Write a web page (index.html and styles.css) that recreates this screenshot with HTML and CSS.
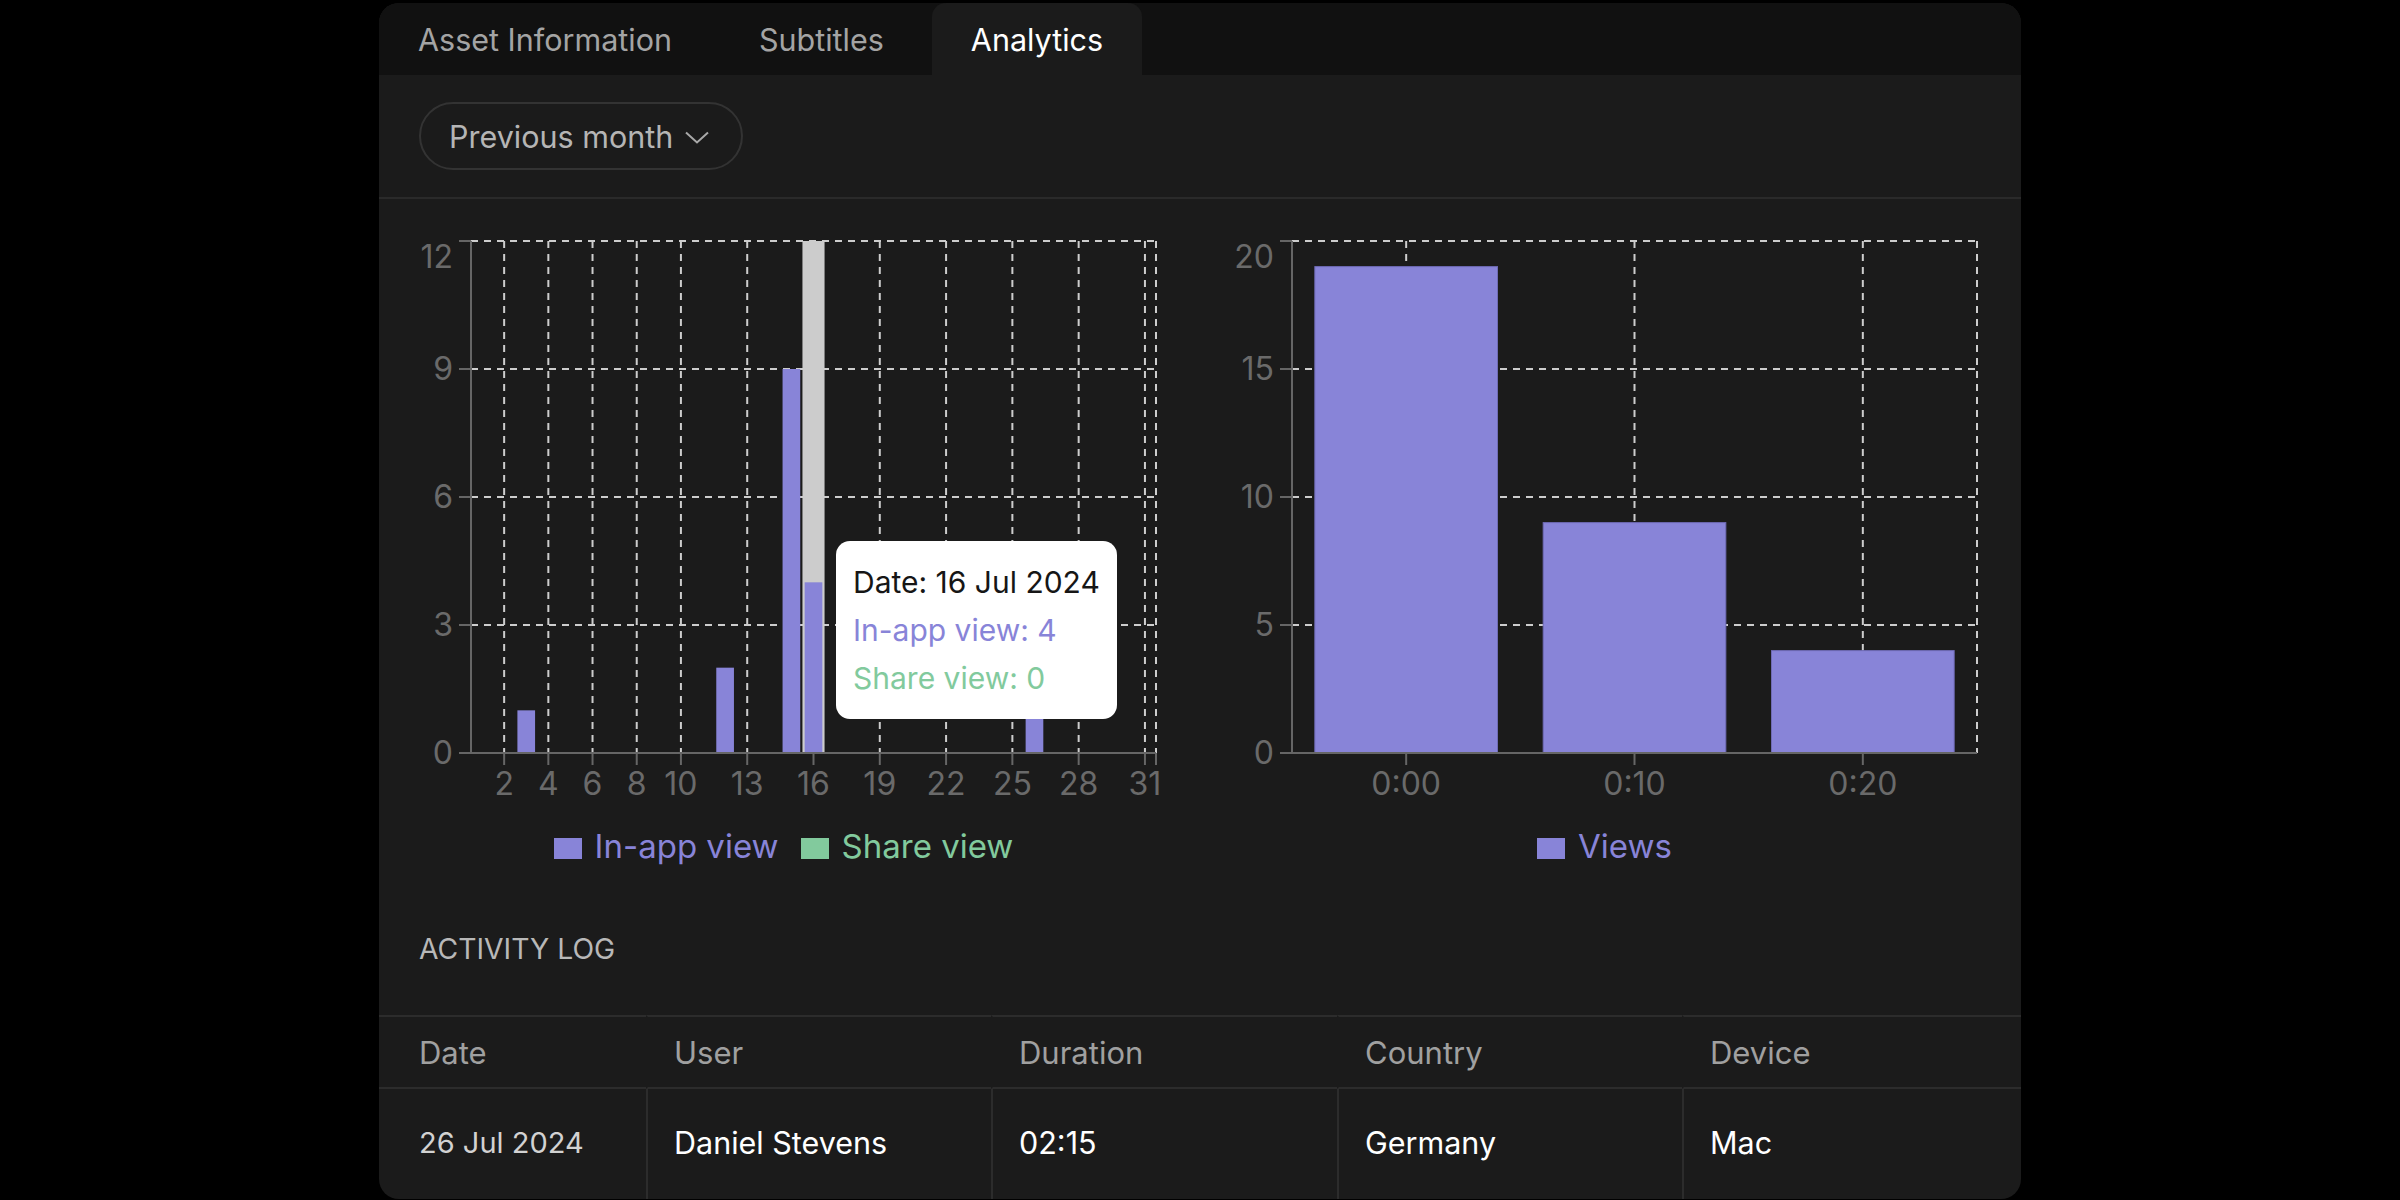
FILE: index.html
```html
<!DOCTYPE html>
<html lang="en">
<head>
<meta charset="utf-8">
<title>Analytics</title>
<link rel="stylesheet" href="styles.css">
</head>
<body>
<div class="panel">
  <div class="tabs">
    <div class="tab">Asset Information</div>
    <div class="tab">Subtitles</div>
    <div class="tab active">Analytics</div>
  </div>

  <div class="filter">
    <button class="dropdown">Previous month
      <svg class="chevron" width="24" height="13" viewBox="0 0 24 13"><polyline points="1,1.5 12,11.5 23,1.5" fill="none" stroke="#a8a8a8" stroke-width="2"/></svg>
    </button>
  </div>

  <div class="charts">
    <div class="chart">
      <svg width="821" height="610" viewBox="0 0 821 610" class="plot">
        <g class="grid" stroke="#cdcdcd" stroke-width="2" stroke-dasharray="7 6" fill="none">
          <line x1="92" y1="42" x2="777" y2="42"/>
          <line x1="92" y1="170" x2="777" y2="170"/>
          <line x1="92" y1="298" x2="777" y2="298"/>
          <line x1="92" y1="426" x2="777" y2="426"/>
          <line x1="125.15" y1="42" x2="125.15" y2="554"/>
          <line x1="169.34" y1="42" x2="169.34" y2="554"/>
          <line x1="213.53" y1="42" x2="213.53" y2="554"/>
          <line x1="257.73" y1="42" x2="257.73" y2="554"/>
          <line x1="301.92" y1="42" x2="301.92" y2="554"/>
          <line x1="368.21" y1="42" x2="368.21" y2="554"/>
          <line x1="434.5" y1="42" x2="434.5" y2="554"/>
          <line x1="500.79" y1="42" x2="500.79" y2="554"/>
          <line x1="567.08" y1="42" x2="567.08" y2="554"/>
          <line x1="633.37" y1="42" x2="633.37" y2="554"/>
          <line x1="699.66" y1="42" x2="699.66" y2="554"/>
          <line x1="765.95" y1="42" x2="765.95" y2="554"/>
          <line x1="777" y1="42" x2="777" y2="554"/>
        </g>
        <rect x="423.45" y="42" width="22.1" height="512" fill="#cccccc"/>
        <g fill="#8884d8">
          <rect x="138.4" y="511.33" width="17.68" height="42.67"/>
          <rect x="337.27" y="468.67" width="17.68" height="85.33"/>
          <rect x="403.56" y="170" width="17.68" height="384"/>
          <rect x="425.66" y="383.33" width="17.68" height="170.67"/>
          <rect x="646.63" y="511.33" width="17.68" height="42.67"/>
        </g>
        <g stroke="#666" stroke-width="2">
          <line x1="92" y1="42" x2="92" y2="555"/>
          <line x1="91" y1="554" x2="777" y2="554"/>
          <line x1="80" y1="42" x2="92" y2="42"/>
          <line x1="80" y1="170" x2="92" y2="170"/>
          <line x1="80" y1="298" x2="92" y2="298"/>
          <line x1="80" y1="426" x2="92" y2="426"/>
          <line x1="80" y1="554" x2="92" y2="554"/>
          <line x1="125.15" y1="554" x2="125.15" y2="566"/>
          <line x1="169.34" y1="554" x2="169.34" y2="566"/>
          <line x1="213.53" y1="554" x2="213.53" y2="566"/>
          <line x1="257.73" y1="554" x2="257.73" y2="566"/>
          <line x1="301.92" y1="554" x2="301.92" y2="566"/>
          <line x1="368.21" y1="554" x2="368.21" y2="566"/>
          <line x1="434.5" y1="554" x2="434.5" y2="566"/>
          <line x1="500.79" y1="554" x2="500.79" y2="566"/>
          <line x1="567.08" y1="554" x2="567.08" y2="566"/>
          <line x1="633.37" y1="554" x2="633.37" y2="566"/>
          <line x1="699.66" y1="554" x2="699.66" y2="566"/>
          <line x1="765.95" y1="554" x2="765.95" y2="566"/>
          <line x1="777" y1="554" x2="777" y2="566"/>
        </g>
        <g class="ticks" text-anchor="end">
          <text x="74" y="69">12</text>
          <text x="74" y="181">9</text>
          <text x="74" y="309">6</text>
          <text x="74" y="437">3</text>
          <text x="74" y="565">0</text>
        </g>
        <g class="ticks" text-anchor="middle">
          <text x="125.15" y="596">2</text>
          <text x="169.34" y="596">4</text>
          <text x="213.53" y="596">6</text>
          <text x="257.73" y="596">8</text>
          <text x="301.92" y="596">10</text>
          <text x="368.21" y="596">13</text>
          <text x="434.5" y="596">16</text>
          <text x="500.79" y="596">19</text>
          <text x="567.08" y="596">22</text>
          <text x="633.37" y="596">25</text>
          <text x="699.66" y="596">28</text>
          <text x="765.95" y="596">31</text>
        </g>
      </svg>
      <div class="tooltip">
        <div class="tt-label">Date: 16 Jul 2024</div>
        <div class="tt-inapp">In-app view: 4</div>
        <div class="tt-share">Share view: 0</div>
      </div>
      <div class="legend">
        <div class="legend-item inapp"><span class="swatch swatch-inapp"></span>In-app view</div>
        <div class="legend-item share"><span class="swatch swatch-share"></span>Share view</div>
      </div>
    </div>

    <div class="chart">
      <svg width="821" height="610" viewBox="0 0 821 610" class="plot">
        <g class="grid" stroke="#cdcdcd" stroke-width="2" stroke-dasharray="7 6" fill="none">
          <line x1="92" y1="42" x2="777" y2="42"/>
          <line x1="92" y1="170" x2="777" y2="170"/>
          <line x1="92" y1="298" x2="777" y2="298"/>
          <line x1="92" y1="426" x2="777" y2="426"/>
          <line x1="206.17" y1="42" x2="206.17" y2="554"/>
          <line x1="434.5" y1="42" x2="434.5" y2="554"/>
          <line x1="662.83" y1="42" x2="662.83" y2="554"/>
          <line x1="777" y1="42" x2="777" y2="554"/>
        </g>
        <g fill="#8884d8" stroke="#6f6bb5" stroke-width="1">
          <rect x="114.83" y="67.6" width="182.67" height="486.4"/>
          <rect x="343.17" y="323.6" width="182.67" height="230.4"/>
          <rect x="571.5" y="451.6" width="182.67" height="102.4"/>
        </g>
        <g stroke="#666" stroke-width="2">
          <line x1="92" y1="42" x2="92" y2="555"/>
          <line x1="91" y1="554" x2="777" y2="554"/>
          <line x1="80" y1="42" x2="92" y2="42"/>
          <line x1="80" y1="170" x2="92" y2="170"/>
          <line x1="80" y1="298" x2="92" y2="298"/>
          <line x1="80" y1="426" x2="92" y2="426"/>
          <line x1="80" y1="554" x2="92" y2="554"/>
          <line x1="206.17" y1="554" x2="206.17" y2="566"/>
          <line x1="434.5" y1="554" x2="434.5" y2="566"/>
          <line x1="662.83" y1="554" x2="662.83" y2="566"/>
        </g>
        <g class="ticks" text-anchor="end">
          <text x="74" y="69">20</text>
          <text x="74" y="181">15</text>
          <text x="74" y="309">10</text>
          <text x="74" y="437">5</text>
          <text x="74" y="565">0</text>
        </g>
        <g class="ticks" text-anchor="middle">
          <text x="206.17" y="596">0:00</text>
          <text x="434.5" y="596">0:10</text>
          <text x="662.83" y="596">0:20</text>
        </g>
      </svg>
      <div class="legend">
        <div class="legend-item inapp"><span class="swatch swatch-inapp"></span>Views</div>
      </div>
    </div>
  </div>

  <div class="activity">
    <h3 class="activity-title">ACTIVITY LOG</h3>
    <table class="log">
      <colgroup>
        <col class="c-date"><col class="c-user"><col class="c-dur"><col class="c-country"><col>
      </colgroup>
      <thead>
        <tr><th>Date</th><th>User</th><th>Duration</th><th>Country</th><th>Device</th></tr>
      </thead>
      <tbody>
        <tr><td class="date">26 Jul 2024</td><td>Daniel Stevens</td><td>02:15</td><td>Germany</td><td>Mac</td></tr>
      </tbody>
    </table>
  </div>
</div>
</body>
</html>
```

FILE: styles.css
```css
* { box-sizing: border-box; }

body {
  margin: 0;
  background: #000;
  font-family: Inter, "Noto Sans", sans-serif;
}

.panel {
  width: 1642px;
  height: 1196px;
  margin: 3px auto 0;
  background: #1b1b1b;
  border-radius: 20px;
  overflow: hidden;
}

.tabs {
  display: flex;
  gap: 9px;
  height: 72px;
  background: #111111;
}

.tab {
  display: flex;
  align-items: center;
  padding: 0 39px;
  font-size: 30.5px;
  color: #a4a4a4;
}

.tab.active {
  background: #1b1b1b;
  color: #ffffff;
  border-radius: 14px 14px 0 0;
}

.filter {
  padding: 27px 40px;
  border-bottom: 2px solid #2a2a2a;
}

.dropdown {
  display: inline-flex;
  align-items: center;
  gap: 12px;
  height: 68px;
  padding: 0 32px 0 28px;
  border: 2px solid #333333;
  border-radius: 34px;
  background: transparent;
  color: #b5b5b5;
  font-family: Inter, "Noto Sans", sans-serif;
  font-size: 30.5px;
}

.chevron { display: block; margin-top: 2px; }

.charts {
  display: grid;
  grid-template-columns: 1fr 1fr;
}

.chart { position: relative; }

.plot { display: block; }

.ticks text {
  font-family: Inter, "Noto Sans", sans-serif;
  font-size: 32px;
  fill: #6a6a6a;
}

.legend {
  display: flex;
  justify-content: center;
  align-items: center;
  gap: 22px;
  height: 30px;
  margin-top: 22px;
  padding-right: 12px;
  font-size: 33px;
}

.legend-item {
  display: flex;
  align-items: center;
  gap: 13px;
}

.legend-item.inapp { color: #8884d8; }
.legend-item.share { color: #82ca9d; }

.swatch {
  display: block;
  width: 28px;
  height: 21px;
  margin-top: 4px;
}

.swatch-inapp { background: #8884d8; }
.swatch-share { background: #82ca9d; }

.tooltip {
  position: absolute;
  left: 457px;
  top: 342px;
  width: 281px;
  padding: 17px;
  background: #ffffff;
  border-radius: 14px;
  font-size: 30px;
  line-height: 48px;
  white-space: nowrap;
}

.tt-label { color: #161616; }
.tt-inapp { color: #8884d8; }
.tt-share { color: #82ca9d; }

.activity-title {
  margin: 71px 0 49px 40px;
  font-size: 28.3px;
  font-weight: 400;
  line-height: 34px;
  color: #b8b8b8;
}

.log {
  width: 100%;
  border-collapse: separate;
  border-spacing: 0;
  table-layout: fixed;
}

.c-date { width: 267px; }
.c-user { width: 345px; }
.c-dur { width: 346px; }
.c-country { width: 345px; }

.log th {
  height: 74px;
  padding: 0 0 0 26px;
  border-top: 2px solid #2c2c2c;
  border-bottom: 2px solid #2c2c2c;
  text-align: left;
  font-weight: 400;
  font-size: 31px;
  color: #a0a0a0;
}

.log th + th { border-left: 2px solid transparent; }

.log td {
  height: 110px;
  padding: 0 0 4px 26px;
  font-size: 30.5px;
  color: #ffffff;
}

.log td + td { border-left: 2px solid #2c2c2c; }

.log th:first-child,
.log td:first-child { padding-left: 40px; }

.log td.date {
  font-size: 29px;
  color: #d2d2d2;
}
```
